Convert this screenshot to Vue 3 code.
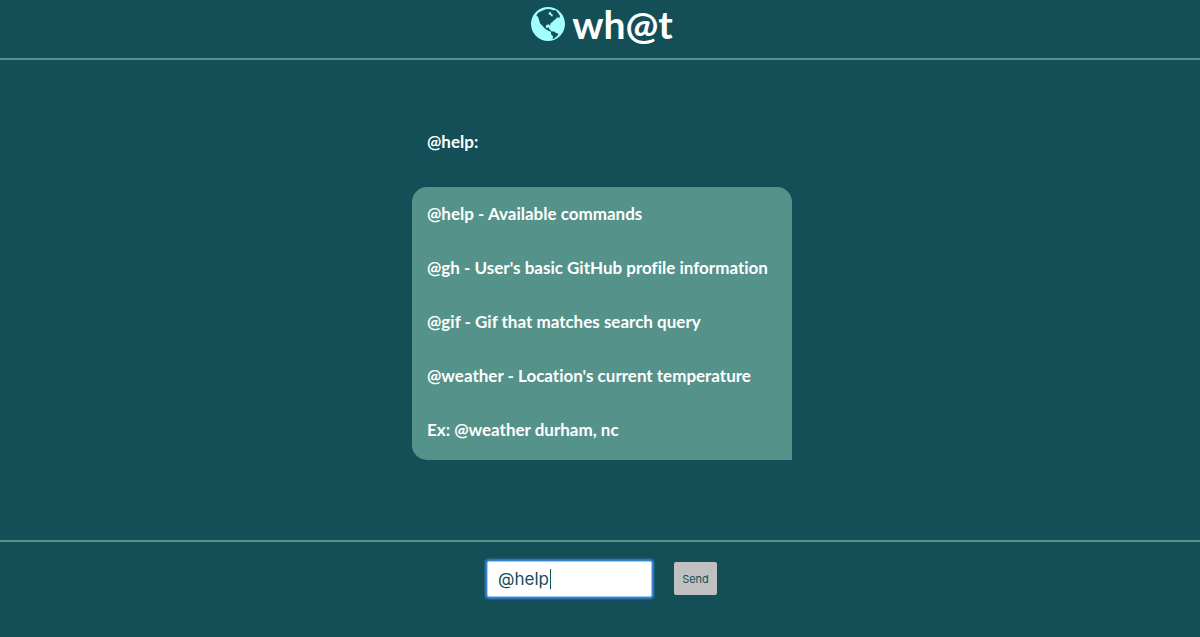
<script setup>
import { ref, onMounted } from 'vue'

const query = ref('@help')
const field = ref(null)
const lines = [
  '@help - Available commands',
  "@gh - User's basic GitHub profile information",
  '@gif - Gif that matches search query',
  "@weather - Location's current temperature",
  'Ex: @weather durham, nc',
]

onMounted(() => {
  field.value.focus()
  field.value.setSelectionRange(5, 5)
})
</script>

<template>
  <div class="app">
    <header class="top">
      <svg class="globe" viewBox="0 0 102 102" aria-hidden="true">
        <circle cx="51" cy="51" r="51" fill="#a1ffff" />
        <path fill="#144f57" d="M16 26 L21 17 L32 12 L44 7 L57 6 L66 10 L75 10 L81 18 L87 27 L85 33 L78 31 L75 36 L70 39 L64 45 L59 49 L57 56 L53 52 L46 54 L44 60 L48 64 L54 61 L55 67 L61 72 L64 76 L56 73 L48 69 L40 63 L35 57 L27 49 L24 38 L21 29Z" />
        <path fill="#a1ffff" d="M53 17 L59 14 L61 20 L66 24 L63 29 L58 24 L53 22Z" />
        <path fill="#144f57" d="M60 75 L68 73 L74 77 L82 80 L80 86 L74 90 L69 95 L65 96 L66 88 L60 82Z" />
      </svg>
      <h1>wh@t</h1>
    </header>
    <main class="chat">
      <div class="thread">
        <p class="asked">@help:</p>
        <div class="bubble">
          <p v-for="line in lines" :key="line">{{ line }}</p>
        </div>
      </div>
    </main>
    <form class="composer" @submit.prevent>
      <div class="field">
        <input ref="field" v-model="query" type="text" aria-label="Message" />
        <span class="caret" aria-hidden="true"></span>
      </div>
      <button type="submit">Send</button>
    </form>
  </div>
</template>

<style>
body {
  margin: 0;
  background: #144f57;
}
</style>

<style scoped>
.app {
  min-height: 100vh;
  display: flex;
  flex-direction: column;
  background: #144f57;
  color: #fff;
  font-family: Lato, sans-serif;
  font-variant-ligatures: none;
}
.top {
  display: flex;
  justify-content: center;
  align-items: center;
  gap: 7px;
  height: 48px;
  padding: 0 0 10px 4px;
  border-bottom: 2px solid #54928a;
}
.globe {
  width: 34px;
  height: 34px;
}
h1 {
  margin: 0;
  font-size: 39px;
  line-height: 48px;
  font-weight: 700;
}
.chat {
  flex: 1;
  display: flex;
  justify-content: center;
  padding-left: 4px;
}
.thread {
  width: 380px;
  padding: 69px 0 80px;
}
p {
  margin: 0;
  padding: 0 15px;
  font-size: 17px;
  line-height: 26px;
  font-weight: 700;
  white-space: nowrap;
}
.bubble {
  display: flex;
  flex-direction: column;
  gap: 28px;
  margin-top: 32px;
  padding: 14px 0 17px;
  background: #54928a;
  border-radius: 15px 15px 0 15px;
}
.composer {
  display: flex;
  justify-content: center;
  align-items: center;
  gap: 22px;
  height: 73px;
  padding: 0 0 22px 4px;
  border-top: 2px solid #54928a;
}
.field {
  position: relative;
  display: flex;
}
input {
  box-sizing: border-box;
  width: 165px;
  height: 36px;
  padding: 0 10px;
  border: 1px solid #a5cdfb;
  border-radius: 2px;
  outline: none;
  box-shadow: 0 0 2px 2px #3585d3;
  background: #fff;
  color: #144f57;
  caret-color: transparent;
  font: 17px Inter, sans-serif;
}
.caret {
  position: absolute;
  top: 8px;
  left: 63px;
  width: 1px;
  height: 20px;
  background: #144f57;
}
button {
  width: 43px;
  height: 33px;
  padding: 0;
  border: 0;
  border-radius: 2px;
  background: #c0c0c0;
  color: #144f57;
  font: 11px Inter, sans-serif;
}
</style>
